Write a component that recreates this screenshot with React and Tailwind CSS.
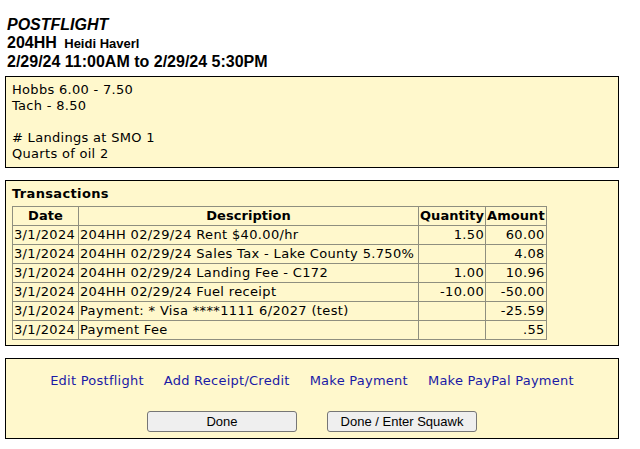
import React from "react";

const rows = [
  { date: "3/1/2024", desc: "204HH 02/29/24 Rent $40.00/hr", qty: "1.50", amt: "60.00" },
  { date: "3/1/2024", desc: "204HH 02/29/24 Sales Tax - Lake County 5.750%", qty: "", amt: "4.08" },
  { date: "3/1/2024", desc: "204HH 02/29/24 Landing Fee - C172", qty: "1.00", amt: "10.96" },
  { date: "3/1/2024", desc: "204HH 02/29/24 Fuel receipt", qty: "-10.00", amt: "-50.00" },
  { date: "3/1/2024", desc: "Payment: * Visa ****1111 6/2027 (test)", qty: "", amt: "-25.59" },
  { date: "3/1/2024", desc: "Payment Fee", qty: "", amt: ".55" },
];

const links = ["Edit Postflight", "Add Receipt/Credit", "Make Payment", "Make PayPal Payment"];

export default function App() {
  return (
    <div className="w-[640px] h-[449px] bg-white px-[5px] pt-[16px] text-black">
      {/* header */}
      <div className="pl-[2px] font-['Liberation_Sans',Arial,sans-serif] font-bold text-[16px] leading-[18px]">
        <div className="italic">POSTFLIGHT</div>
        <div>
          204HH <span className="text-[13px] ml-[3px]">Heidi Haverl</span>
        </div>
        <div>2/29/24 11:00AM to 2/29/24 5:30PM</div>
      </div>

      {/* meter readings */}
      <div className="mt-[5px] w-[614px] border border-black bg-[#fff8cc] px-[6px] py-[5px] font-['DejaVu_Sans',Verdana,sans-serif] text-[13px] leading-[16px] tracking-[0.3px]">
        <div>Hobbs 6.00 - 7.50</div>
        <div>Tach - 8.50</div>
        <div>&nbsp;</div>
        <div># Landings at SMO 1</div>
        <div>Quarts of oil 2</div>
      </div>

      {/* transactions */}
      <div className="mt-[12px] w-[614px] border border-black bg-[#fff8cc] px-[6px] pt-[5px] pb-[5px] font-['DejaVu_Sans',Verdana,sans-serif] text-[13px] leading-[16px] tracking-[0.35px]">
        <div className="font-bold mb-[4px]">Transactions</div>
        <table className="border-collapse border border-[#8f8f7f]">
          <thead>
            <tr className="font-bold tracking-[0.05px]">
              <th className="border border-[#8f8f7f] px-[1px] h-[19px] w-[66px]">Date</th>
              <th className="border border-[#8f8f7f] px-[1px] w-[340px]">Description</th>
              <th className="border border-[#8f8f7f] px-[1px]">Quantity</th>
              <th className="border border-[#8f8f7f] px-[1px]">Amount</th>
            </tr>
          </thead>
          <tbody>
            {rows.map((r, i) => (
              <tr key={i}>
                <td className="border border-[#8f8f7f] px-[1px] h-[19px] whitespace-nowrap">{r.date}</td>
                <td className="border border-[#8f8f7f] px-[1px] whitespace-nowrap">{r.desc}</td>
                <td className="border border-[#8f8f7f] px-[1px] text-right">{r.qty}</td>
                <td className="border border-[#8f8f7f] px-[1px] text-right">{r.amt}</td>
              </tr>
            ))}
          </tbody>
        </table>
      </div>

      {/* actions */}
      <div className="mt-[12px] w-[614px] h-[81px] border border-black bg-[#fff8cc] flex flex-col items-center pt-[14px]">
        <div className="flex gap-[20px] font-['DejaVu_Sans',Verdana,sans-serif] text-[13px] leading-[16px] tracking-[0.25px] text-[#1a1aa6]">
          {links.map((l) => (
            <a key={l} href="#" className="cursor-pointer">
              {l}
            </a>
          ))}
        </div>
        <div className="flex gap-[30px] mt-[22px]">
          <button className="w-[150px] h-[21px] rounded-[3px] border border-[#767676] bg-[#efefef] font-['Liberation_Sans',Arial,sans-serif] text-[13px]">
            Done
          </button>
          <button className="w-[150px] h-[21px] rounded-[3px] border border-[#767676] bg-[#efefef] font-['Liberation_Sans',Arial,sans-serif] text-[13px]">
            Done / Enter Squawk
          </button>
        </div>
      </div>
    </div>
  );
}
